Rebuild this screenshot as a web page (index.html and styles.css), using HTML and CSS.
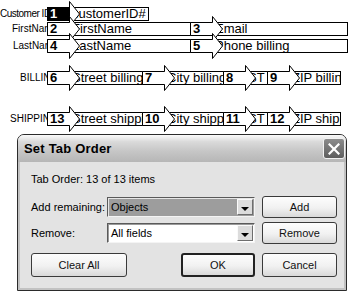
FILE: index.html
```html
<!DOCTYPE html>
<html lang="en">
<head>
    <meta charset="UTF-8">
    <meta name="viewport" content="width=device-width, initial-scale=1.0">
    <title>Set Tab Order</title>
    <link rel="stylesheet" href="styles.css">
</head>
<body>
    <svg class="defs" width="0" height="0">
        <symbol id="tab-arrow" viewBox="0 0 33 26">
            <path d="M0.5 6.5H22.5V0.5L32.5 13L22.5 25.5V19.5H0.5Z" fill="#fff" stroke="#000"/>
        </symbol>
    </svg>

    <div class="form">
        <div class="row row-1">
            <span class="label pad-cust">Customer ID#</span>
            <div class="field w-cust">
                <span class="tab current"><svg width="33" height="26"><use href="#tab-arrow"/></svg><b>1</b></span>
                <span class="txt">customerID#</span>
            </div>
        </div>
        <div class="row row-2">
            <span class="label pad-first">FirstName</span>
            <div class="field w-half">
                <span class="tab"><svg width="33" height="26"><use href="#tab-arrow"/></svg><b>2</b></span>
                <span class="txt">FirstName</span>
            </div>
            <div class="field w-rest">
                <span class="tab"><svg width="33" height="26"><use href="#tab-arrow"/></svg><b>3</b></span>
                <span class="txt">Email</span>
            </div>
        </div>
        <div class="row row-3">
            <span class="label pad-last">LastName</span>
            <div class="field w-half">
                <span class="tab"><svg width="33" height="26"><use href="#tab-arrow"/></svg><b>4</b></span>
                <span class="txt">LastName</span>
            </div>
            <div class="field w-rest">
                <span class="tab"><svg width="33" height="26"><use href="#tab-arrow"/></svg><b>5</b></span>
                <span class="txt">Phone billing</span>
            </div>
        </div>
        <div class="row row-4">
            <span class="label pad-bill">BILLING</span>
            <div class="field w-street">
                <span class="tab"><svg width="33" height="26"><use href="#tab-arrow"/></svg><b>6</b></span>
                <span class="txt">Street billing</span>
            </div>
            <div class="field w-city">
                <span class="tab"><svg width="33" height="26"><use href="#tab-arrow"/></svg><b>7</b></span>
                <span class="txt">City billing</span>
            </div>
            <div class="field w-state">
                <span class="tab"><svg width="33" height="26"><use href="#tab-arrow"/></svg><b>8</b></span>
                <span class="txt">ST</span>
            </div>
            <div class="field w-zip">
                <span class="tab"><svg width="33" height="26"><use href="#tab-arrow"/></svg><b>9</b></span>
                <span class="txt">ZIP billing</span>
            </div>
        </div>
        <div class="row row-5">
            <span class="label pad-ship">SHIPPING</span>
            <div class="field w-street">
                <span class="tab"><svg width="33" height="26"><use href="#tab-arrow"/></svg><b>13</b></span>
                <span class="txt">Street shipping</span>
            </div>
            <div class="field w-city">
                <span class="tab"><svg width="33" height="26"><use href="#tab-arrow"/></svg><b>10</b></span>
                <span class="txt">City shipping</span>
            </div>
            <div class="field w-state">
                <span class="tab"><svg width="33" height="26"><use href="#tab-arrow"/></svg><b>11</b></span>
                <span class="txt">ST</span>
            </div>
            <div class="field w-zip">
                <span class="tab"><svg width="33" height="26"><use href="#tab-arrow"/></svg><b>12</b></span>
                <span class="txt">ZIP shipping</span>
            </div>
        </div>
    </div>

    <div class="dialog">
        <div class="titlebar">
            <span class="title">Set Tab Order</span>
            <button class="close" aria-label="Close">
                <svg width="12" height="12" viewBox="0 0 12 12">
                    <path d="M1.5 1.5L10.5 10.5M10.5 1.5L1.5 10.5" stroke="#fff" stroke-width="2.2" stroke-linecap="square"/>
                </svg>
            </button>
        </div>
        <div class="dlg-body">
            <p class="count">Tab Order: 13 of 13 items</p>
            <div class="options">
                <label>Add remaining:</label>
                <div class="select active"><span>Objects</span><i class="drop"></i></div>
                <button class="btn">Add</button>
                <label>Remove:</label>
                <div class="select"><span>All fields</span><i class="drop"></i></div>
                <button class="btn">Remove</button>
            </div>
            <div class="actions">
                <button class="btn btn-wide">Clear All</button>
                <span class="spacer"></span>
                <button class="btn btn-default">OK</button>
                <button class="btn">Cancel</button>
            </div>
        </div>
    </div>
</body>
</html>
```

FILE: styles.css
```css
body {
    margin: 0;
    width: 350px;
    height: 291px;
    overflow: hidden;
    background-color: #fff;
    color: #000;
    font-family: "Liberation Sans", Arial, sans-serif;
}
.defs {
    position: absolute;
    width: 0;
    height: 0;
    overflow: hidden;
}

/* form fields with tab order badges */
.form {
    padding-top: 7px;
}
.row {
    display: flex;
    height: 14px;
}
.row-2 { margin-top: 1px; }
.row-3 { margin-top: 3px; }
.row-4 { margin-top: 18px; }
.row-5 { margin-top: 27px; }
.label {
    box-sizing: border-box;
    flex: none;
    width: 47px;
    overflow: hidden;
    white-space: nowrap;
    font-size: 10px;
    line-height: 14px;
}
.pad-cust { letter-spacing: -0.5px; }
.pad-first { padding-left: 12px; }
.pad-last { padding-left: 13px; }
.pad-bill { padding-left: 20px; }
.pad-ship { padding-left: 10px; }
.field {
    position: relative;
    box-sizing: border-box;
    flex: none;
    height: 14px;
    border: 1px solid #000;
}
.field + .field {
    margin-left: -1px;
}
.w-cust { width: 102px; }
.w-half { width: 144px; }
.w-rest { width: 158px; }
.w-street { width: 96px; }
.w-city { width: 82px; }
.w-state { width: 45px; }
.w-zip { width: 74px; }
.txt {
    display: block;
    overflow: hidden;
    white-space: nowrap;
    padding-left: 24px;
    font-size: 13px;
    line-height: 12px;
}
.tab {
    position: absolute;
    left: -1px;
    top: -7px;
    z-index: 1;
    width: 33px;
    height: 26px;
}
.tab svg {
    display: block;
}
.tab b {
    position: absolute;
    left: 0;
    top: 6px;
    box-sizing: border-box;
    width: 23px;
    height: 14px;
    padding: 1px 0 0 3px;
    font-size: 13px;
    line-height: 12px;
}
.tab.current b {
    background-color: #000;
    color: #fff;
}

/* dialog */
.dialog {
    display: flex;
    flex-direction: column;
    box-sizing: border-box;
    width: 330px;
    height: 157px;
    margin: 8px 0 0 17px;
    border: 1px solid #2b2b2b;
    border-radius: 7px 7px 0 0;
    overflow: hidden;
    background-color: #e3e3e3;
}
.titlebar {
    display: flex;
    align-items: center;
    justify-content: space-between;
    height: 27px;
    padding: 0 1px 0 6px;
    background: linear-gradient(#fbfbfb 0, #dadada 25%, #c6c6c6 60%, #b6b6b6 100%);
}
.title {
    font-size: 13px;
    font-weight: bold;
    letter-spacing: 0.2px;
}
.close {
    display: flex;
    align-items: center;
    justify-content: center;
    width: 22px;
    height: 21px;
    padding: 0;
    border: 1px solid #f2f2f2;
    border-radius: 3px;
    background: linear-gradient(#8c8c8c, #5e5e5e);
}
.dlg-body {
    flex: 1;
    padding: 10px 9px 0 13px;
    box-shadow: inset 2px 0 #c2c2c2, inset -2px 0 #c2c2c2, inset 0 -2px #c2c2c2;
    font-size: 11px;
}
.count {
    margin: 0;
    line-height: 14px;
}
.options {
    display: grid;
    grid-template-columns: 76px 148px 1fr;
    grid-auto-rows: 22px;
    row-gap: 4px;
    align-items: center;
    margin-top: 10px;
}
.options .btn {
    justify-self: end;
}
.select {
    position: relative;
    box-sizing: border-box;
    height: 20px;
    padding-left: 3px;
    border: 1px solid;
    border-color: #5a5a5a #f4f4f4 #f4f4f4 #5a5a5a;
    box-shadow: inset 1px 1px #9a9a9a;
    background-color: #fff;
    line-height: 18px;
}
.select.active {
    background-color: #9d9d9d;
    box-shadow: inset 1px 1px #e6e6e6;
}
.drop {
    position: absolute;
    top: 1px;
    right: 1px;
    bottom: 1px;
    box-sizing: border-box;
    width: 16px;
    border: 1px solid;
    border-color: #fafafa #6e6e6e #6e6e6e #fafafa;
    background-color: #dcdcdc;
}
.drop::after {
    content: "";
    position: absolute;
    left: 3px;
    top: 7px;
    border-left: 4px solid transparent;
    border-right: 4px solid transparent;
    border-top: 4px solid #000;
}
.btn {
    box-sizing: border-box;
    width: 75px;
    height: 22px;
    padding: 0;
    border: 1px solid #3a3a3a;
    border-radius: 3px;
    background: linear-gradient(#fdfdfd, #f1f1f1 55%, #d9d9d9);
    color: #111;
    font-family: "Liberation Sans", Arial, sans-serif;
    font-size: 11px;
}
.actions {
    display: flex;
    margin-top: 9px;
}
.actions .btn {
    height: 24px;
}
.btn-wide {
    width: 96px;
}
.spacer {
    flex: 1;
}
.btn-default {
    width: 74px;
    margin-right: 7px;
    border-width: 2px;
    border-color: #222;
}
```
